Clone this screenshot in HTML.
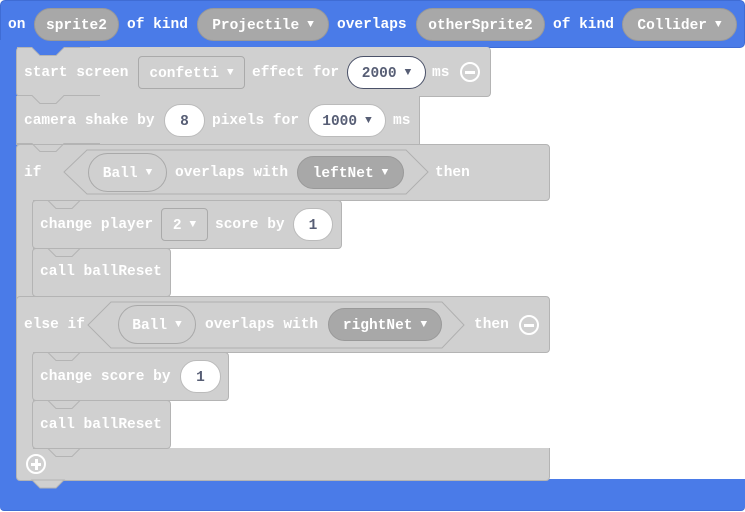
<!DOCTYPE html>
<html><head><style>
body{margin:0;width:745px;height:512px;background:#fff;position:relative;overflow:hidden;font-family:"Liberation Mono",monospace;font-weight:bold;font-size:14.5px;color:#fff}
.a{position:absolute}
.blk{position:absolute;background:#d0d0d0;border:1px solid #b4b4b4;border-radius:4px;box-sizing:border-box}
.t{position:absolute;line-height:20px;white-space:pre}
.pill,.box{position:absolute;box-sizing:border-box;border-radius:17px;display:flex;align-items:center;justify-content:center;white-space:pre;padding-top:2px}
.box{border:1px solid #aaa;border-radius:4px;color:#fff}
.dk{background:#a8a8a8;border:1px solid #999;color:#fff}
.wh{background:#fff;border:1px solid #bbb;color:#575e75}
.wh2{background:#fff;border:1px solid #4a5168;color:#575e75}
.ol{background:#d0d0d0;border:1px solid #a9a9a9;color:#fff}
.ar{font-size:11px;margin-left:8px;position:relative;top:-1px}
.circ{position:absolute;width:20px;height:20px;border:2px solid #fff;border-radius:50%;box-sizing:border-box}
</style></head><body>
<div class="a" style="left:0;top:0;width:745px;height:48px;background:#4a7be8;border-radius:5px;border:1px solid #3f6cd4;box-sizing:border-box"></div>
<div class="a" style="left:0;top:40px;width:17px;height:450px;background:#4a7be8"></div>
<div class="a" style="left:0;top:479px;width:745px;height:31px;background:#4a7be8;border-radius:0 0 4px 4px;border-bottom:1px solid #3f6cd4"></div>

<div class="t" style="left:8px;top:15px">on</div>
<div class="pill dk" style="left:34px;top:8px;width:85px;height:33px">sprite2</div>
<div class="t" style="left:127px;top:15px">of kind</div>
<div class="pill dk" style="left:197px;top:8px;width:132px;height:33px">Projectile<span class="ar">▼</span></div>
<div class="t" style="left:337px;top:15px">overlaps</div>
<div class="pill dk" style="left:416px;top:8px;width:129px;height:33px">otherSprite2</div>
<div class="t" style="left:553px;top:15px">of kind</div>
<div class="pill dk" style="left:622px;top:8px;width:115px;height:33px">Collider<span class="ar">▼</span></div>

<div class="blk" style="left:16px;top:144px;width:534px;height:57px"></div>
<div class="a" style="left:16px;top:195px;width:17px;height:105px;background:#d0d0d0;border-left:1px solid #b4b4b4"></div>
<div class="blk" style="left:16px;top:296px;width:534px;height:57px"></div>
<div class="a" style="left:16px;top:347px;width:17px;height:105px;background:#d0d0d0;border-left:1px solid #b4b4b4"></div>
<div class="blk" style="left:16px;top:448px;width:534px;height:33px;border-top:none;border-radius:0 0 4px 4px"></div>
<svg class="a" style="left:0;top:0" width="745" height="512">
<path d="M32 480 l8 8 h16 l8 -8 z" fill="#d0d0d0" stroke="#b4b4b4"/>
<path d="M33 247.5 H48 l8 8 h16 l8 -8" fill="none" stroke="#b4b4b4"/>
<path d="M33 399.5 H48 l8 8 h16 l8 -8" fill="none" stroke="#b4b4b4"/>
<polygon points="64,172 87,150 406,150 428,172 406,194 87,194" fill="#d0d0d0" stroke="#b0b0b0"/>
<polygon points="88,325 111,302 442,302 464,325 442,348 111,348" fill="#d0d0d0" stroke="#b0b0b0"/>
</svg>

<div class="blk" style="left:16px;top:47px;width:475px;height:50px;border-top:none"></div>
<svg class="a" style="left:0;top:40px" width="100" height="20"><path d="M17 7.5 H32 l8 8 h16 l8 -8 H90" fill="none" stroke="#b4b4b4"/><path d="M32 7 l8 8 h16 l8 -8 z" fill="#4a7be8"/></svg>
<div class="t" style="left:24px;top:63px">start screen</div>
<div class="box" style="left:138px;top:56px;width:107px;height:33px">confetti<span class="ar">▼</span></div>
<div class="t" style="left:252px;top:63px">effect for</div>
<div class="pill wh2" style="left:347px;top:56px;width:79px;height:33px">2000<span class="ar">▼</span></div>
<div class="t" style="left:432px;top:63px">ms</div>
<div class="circ" style="left:460px;top:62px"></div><div class="a" style="left:465px;top:71px;width:10px;height:3px;background:#fff"></div>

<div class="blk" style="left:16px;top:96px;width:404px;height:49px;border-top:none;border-radius:0"></div>
<svg class="a" style="left:0;top:90px" width="100" height="20"><path d="M17 5.5 H32 l8 8 h16 l8 -8 H100" fill="none" stroke="#b4b4b4"/></svg>
<div class="t" style="left:24px;top:111px">camera shake by</div>
<div class="pill wh" style="left:164px;top:104px;width:41px;height:33px">8</div>
<div class="t" style="left:212px;top:111px">pixels for</div>
<div class="pill wh" style="left:308px;top:104px;width:78px;height:33px">1000<span class="ar">▼</span></div>
<div class="t" style="left:393px;top:111px">ms</div>
<svg class="a" style="left:0;top:138px" width="100" height="20"><path d="M17 5.5 H32 l8 8 h16 l8 -8 H100" fill="none" stroke="#b4b4b4"/></svg>

<div class="t" style="left:24px;top:163px">if</div>
<div class="pill ol" style="left:88px;top:153px;width:79px;height:39px;border-radius:20px">Ball<span class="ar">▼</span></div>
<div class="t" style="left:175px;top:163px">overlaps with</div>
<div class="pill dk" style="left:297px;top:156px;width:107px;height:33px">leftNet<span class="ar">▼</span></div>
<div class="t" style="left:435px;top:163px">then</div>

<div class="blk" style="left:32px;top:200px;width:310px;height:49px"></div>
<svg class="a" style="left:16px;top:194px" width="100" height="20"><path d="M17 6.5 H32 l8 8 h16 l8 -8 H100" fill="none" stroke="#b4b4b4"/></svg>
<div class="t" style="left:40px;top:215px">change player</div>
<div class="box" style="left:161px;top:208px;width:47px;height:33px">2<span class="ar">▼</span></div>
<div class="t" style="left:215px;top:215px">score by</div>
<div class="pill wh" style="left:293px;top:208px;width:40px;height:33px">1</div>

<div class="blk" style="left:32px;top:248px;width:139px;height:49px"></div>
<svg class="a" style="left:16px;top:242px" width="100" height="20"><path d="M17 6.5 H32 l8 8 h16 l8 -8 H100" fill="none" stroke="#b4b4b4"/></svg>
<div class="t" style="left:40px;top:262px">call ballReset</div>

<div class="t" style="left:24px;top:315px">else if</div>
<div class="pill ol" style="left:118px;top:305px;width:78px;height:39px;border-radius:20px">Ball<span class="ar">▼</span></div>
<div class="t" style="left:205px;top:315px">overlaps with</div>
<div class="pill dk" style="left:328px;top:308px;width:114px;height:33px">rightNet<span class="ar">▼</span></div>
<div class="t" style="left:474px;top:315px">then</div>
<div class="circ" style="left:519px;top:315px"></div><div class="a" style="left:524px;top:324px;width:10px;height:3px;background:#fff"></div>

<div class="blk" style="left:32px;top:352px;width:197px;height:49px"></div>
<svg class="a" style="left:16px;top:346px" width="100" height="20"><path d="M17 6.5 H32 l8 8 h16 l8 -8 H100" fill="none" stroke="#b4b4b4"/></svg>
<div class="t" style="left:40px;top:367px">change score by</div>
<div class="pill wh" style="left:180px;top:360px;width:41px;height:33px">1</div>

<div class="blk" style="left:32px;top:400px;width:139px;height:49px"></div>
<svg class="a" style="left:16px;top:394px" width="100" height="20"><path d="M17 6.5 H32 l8 8 h16 l8 -8 H100" fill="none" stroke="#b4b4b4"/></svg>
<div class="t" style="left:40px;top:415px">call ballReset</div>
<svg class="a" style="left:16px;top:442px" width="100" height="20"><path d="M17 6.5 H32 l8 8 h16 l8 -8 H100" fill="none" stroke="#b4b4b4"/></svg>

<div class="circ" style="left:26px;top:454px"></div><div class="a" style="left:31px;top:463px;width:10px;height:3px;background:#fff"></div><div class="a" style="left:34.5px;top:459px;width:3px;height:11px;background:#fff"></div>
</body></html>
